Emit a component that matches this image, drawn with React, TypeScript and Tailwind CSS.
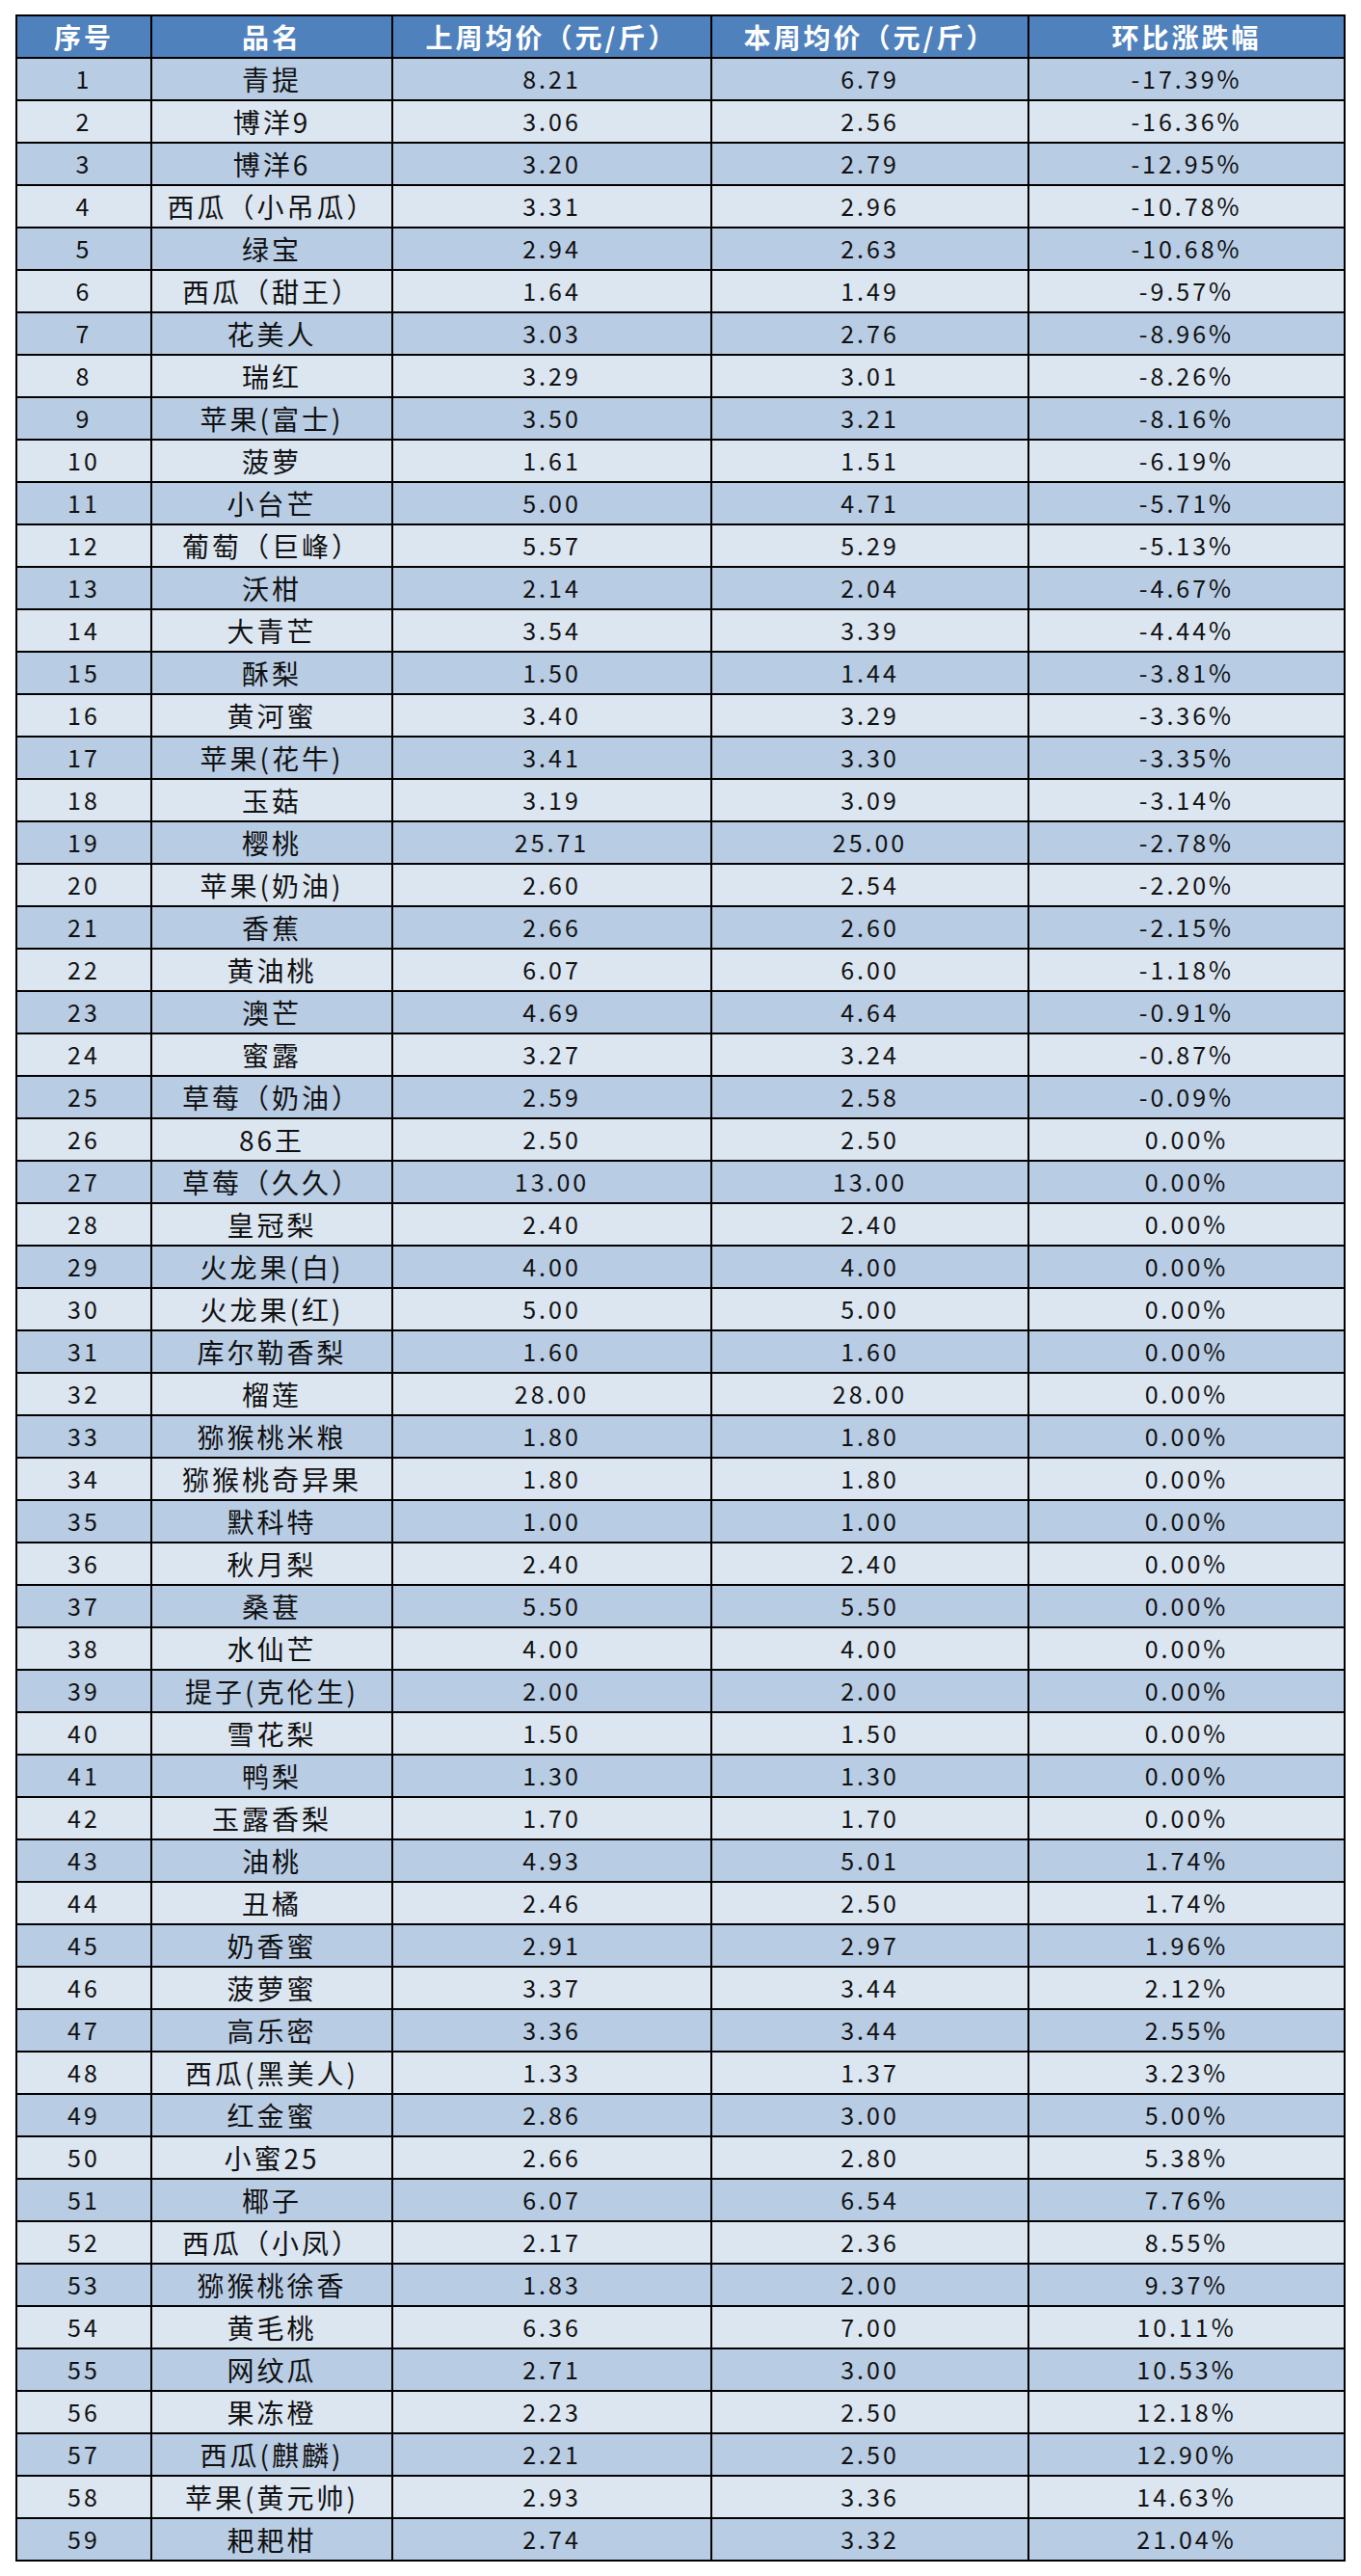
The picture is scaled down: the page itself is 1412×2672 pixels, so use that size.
const rows: [string, string, string, string][] = [
  ['青提', '8.21', '6.79', '-17.39%'],
  ['博洋9', '3.06', '2.56', '-16.36%'],
  ['博洋6', '3.20', '2.79', '-12.95%'],
  ['西瓜（小吊瓜）', '3.31', '2.96', '-10.78%'],
  ['绿宝', '2.94', '2.63', '-10.68%'],
  ['西瓜（甜王）', '1.64', '1.49', '-9.57%'],
  ['花美人', '3.03', '2.76', '-8.96%'],
  ['瑞红', '3.29', '3.01', '-8.26%'],
  ['苹果(富士)', '3.50', '3.21', '-8.16%'],
  ['菠萝', '1.61', '1.51', '-6.19%'],
  ['小台芒', '5.00', '4.71', '-5.71%'],
  ['葡萄（巨峰）', '5.57', '5.29', '-5.13%'],
  ['沃柑', '2.14', '2.04', '-4.67%'],
  ['大青芒', '3.54', '3.39', '-4.44%'],
  ['酥梨', '1.50', '1.44', '-3.81%'],
  ['黄河蜜', '3.40', '3.29', '-3.36%'],
  ['苹果(花牛)', '3.41', '3.30', '-3.35%'],
  ['玉菇', '3.19', '3.09', '-3.14%'],
  ['樱桃', '25.71', '25.00', '-2.78%'],
  ['苹果(奶油)', '2.60', '2.54', '-2.20%'],
  ['香蕉', '2.66', '2.60', '-2.15%'],
  ['黄油桃', '6.07', '6.00', '-1.18%'],
  ['澳芒', '4.69', '4.64', '-0.91%'],
  ['蜜露', '3.27', '3.24', '-0.87%'],
  ['草莓（奶油）', '2.59', '2.58', '-0.09%'],
  ['86王', '2.50', '2.50', '0.00%'],
  ['草莓（久久）', '13.00', '13.00', '0.00%'],
  ['皇冠梨', '2.40', '2.40', '0.00%'],
  ['火龙果(白)', '4.00', '4.00', '0.00%'],
  ['火龙果(红)', '5.00', '5.00', '0.00%'],
  ['库尔勒香梨', '1.60', '1.60', '0.00%'],
  ['榴莲', '28.00', '28.00', '0.00%'],
  ['猕猴桃米粮', '1.80', '1.80', '0.00%'],
  ['猕猴桃奇异果', '1.80', '1.80', '0.00%'],
  ['默科特', '1.00', '1.00', '0.00%'],
  ['秋月梨', '2.40', '2.40', '0.00%'],
  ['桑葚', '5.50', '5.50', '0.00%'],
  ['水仙芒', '4.00', '4.00', '0.00%'],
  ['提子(克伦生)', '2.00', '2.00', '0.00%'],
  ['雪花梨', '1.50', '1.50', '0.00%'],
  ['鸭梨', '1.30', '1.30', '0.00%'],
  ['玉露香梨', '1.70', '1.70', '0.00%'],
  ['油桃', '4.93', '5.01', '1.74%'],
  ['丑橘', '2.46', '2.50', '1.74%'],
  ['奶香蜜', '2.91', '2.97', '1.96%'],
  ['菠萝蜜', '3.37', '3.44', '2.12%'],
  ['高乐密', '3.36', '3.44', '2.55%'],
  ['西瓜(黑美人)', '1.33', '1.37', '3.23%'],
  ['红金蜜', '2.86', '3.00', '5.00%'],
  ['小蜜25', '2.66', '2.80', '5.38%'],
  ['椰子', '6.07', '6.54', '7.76%'],
  ['西瓜（小凤）', '2.17', '2.36', '8.55%'],
  ['猕猴桃徐香', '1.83', '2.00', '9.37%'],
  ['黄毛桃', '6.36', '7.00', '10.11%'],
  ['网纹瓜', '2.71', '3.00', '10.53%'],
  ['果冻橙', '2.23', '2.50', '12.18%'],
  ['西瓜(麒麟)', '2.21', '2.50', '12.90%'],
  ['苹果(黄元帅)', '2.93', '3.36', '14.63%'],
  ['耙耙柑', '2.74', '3.32', '21.04%'],
]

const headers = ['序号', '品名', '上周均价（元/斤）', '本周均价（元/斤）', '环比涨跌幅']

const grid = 'grid grid-cols-[138px_248px_329px_327px_326px] gap-x-[2px]'

export default function App() {
  return (
    <div className="min-h-screen bg-white pl-[16px] pt-[15px] font-['Noto_Sans_CJK_SC',sans-serif]">
      <div className="flex w-[1380px] flex-col gap-[2px] bg-black p-[2px]">
        <div className={grid}>
          {headers.map((h) => (
            <div
              key={h}
              className="flex h-[42px] items-center justify-center bg-[#4f81bd] text-[28px] font-bold tracking-[3px] text-white"
            >
              {h}
            </div>
          ))}
        </div>
        {rows.map((r, i) => {
          const bg = i % 2 === 0 ? 'bg-[#b8cce4]' : 'bg-[#dce6f1]'
          const cells = [String(i + 1), ...r]
          return (
            <div key={i} className={grid}>
              {cells.map((c, j) => (
                <div
                  key={j}
                  className={`flex h-[42px] items-center justify-center text-[#111] ${bg} ${
                    j === 1 ? 'text-[28px] tracking-[3px]' : 'text-[25px] tracking-[3px]'
                  }`}
                >
                  {c}
                </div>
              ))}
            </div>
          )
        })}
      </div>
    </div>
  )
}
